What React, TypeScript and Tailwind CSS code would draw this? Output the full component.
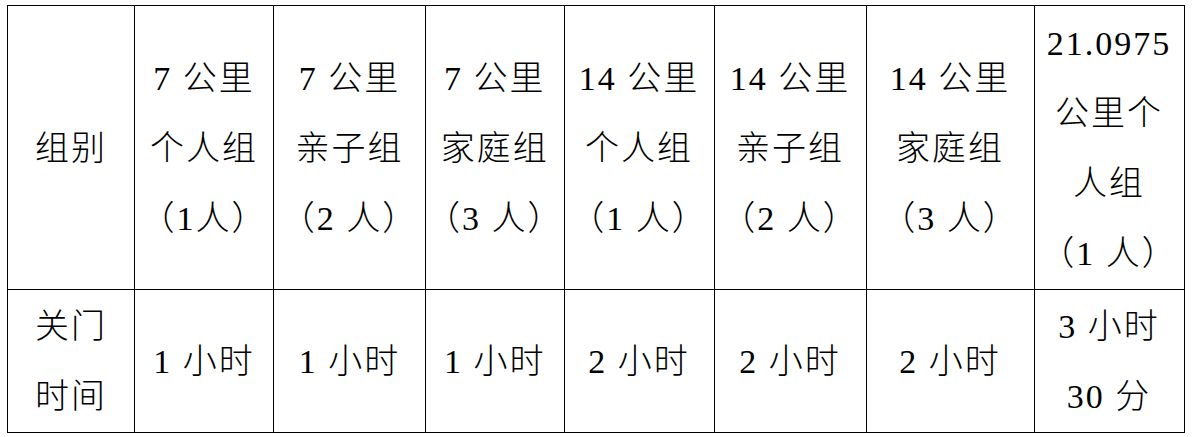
const font = {
  fontFamily: '"Liberation Serif", "Noto Sans CJK SC", serif',
};

type Col = { width: number; head: string[]; time: string[] };

const COLUMNS: Col[] = [
  { width: 127, head: ["组别"], time: ["关门", "时间"] },
  { width: 139, head: ["7 公里", "个人组", "（1人）"], time: ["1 小时"] },
  { width: 152, head: ["7 公里", "亲子组", "（2 人）"], time: ["1 小时"] },
  { width: 138, head: ["7 公里", "家庭组", "（3 人）"], time: ["1 小时"] },
  { width: 150, head: ["14 公里", "个人组", "（1 人）"], time: ["2 小时"] },
  { width: 152, head: ["14 公里", "亲子组", "（2 人）"], time: ["2 小时"] },
  { width: 168, head: ["14 公里", "家庭组", "（3 人）"], time: ["2 小时"] },
  { width: 150, head: ["21.0975", "公里个", "人组", "（1 人）"], time: ["3 小时", "30 分"] },
];

function Cell({ lines }: { lines: string[] }) {
  return (
    <td className="border border-black p-0 pt-[2px] text-center align-middle">
      {lines.map((line, i) => (
        <div key={i} className="leading-[70px] whitespace-nowrap">
          {line}
        </div>
      ))}
    </td>
  );
}

export default function App() {
  return (
    <div className="min-h-[437px] w-[1192px] bg-white pl-[7px] pt-[5px]">
      <table
        style={font}
        className="table-fixed border-collapse text-[34px] font-light tracking-[2px] text-black"
      >
        <colgroup>
          {COLUMNS.map((c, i) => (
            <col key={i} style={{ width: c.width }} />
          ))}
        </colgroup>
        <tbody>
          <tr className="h-[284px]">
            {COLUMNS.map((c, i) => (
              <Cell key={i} lines={c.head} />
            ))}
          </tr>
          <tr className="h-[143px]">
            {COLUMNS.map((c, i) => (
              <Cell key={i} lines={c.time} />
            ))}
          </tr>
        </tbody>
      </table>
    </div>
  );
}
